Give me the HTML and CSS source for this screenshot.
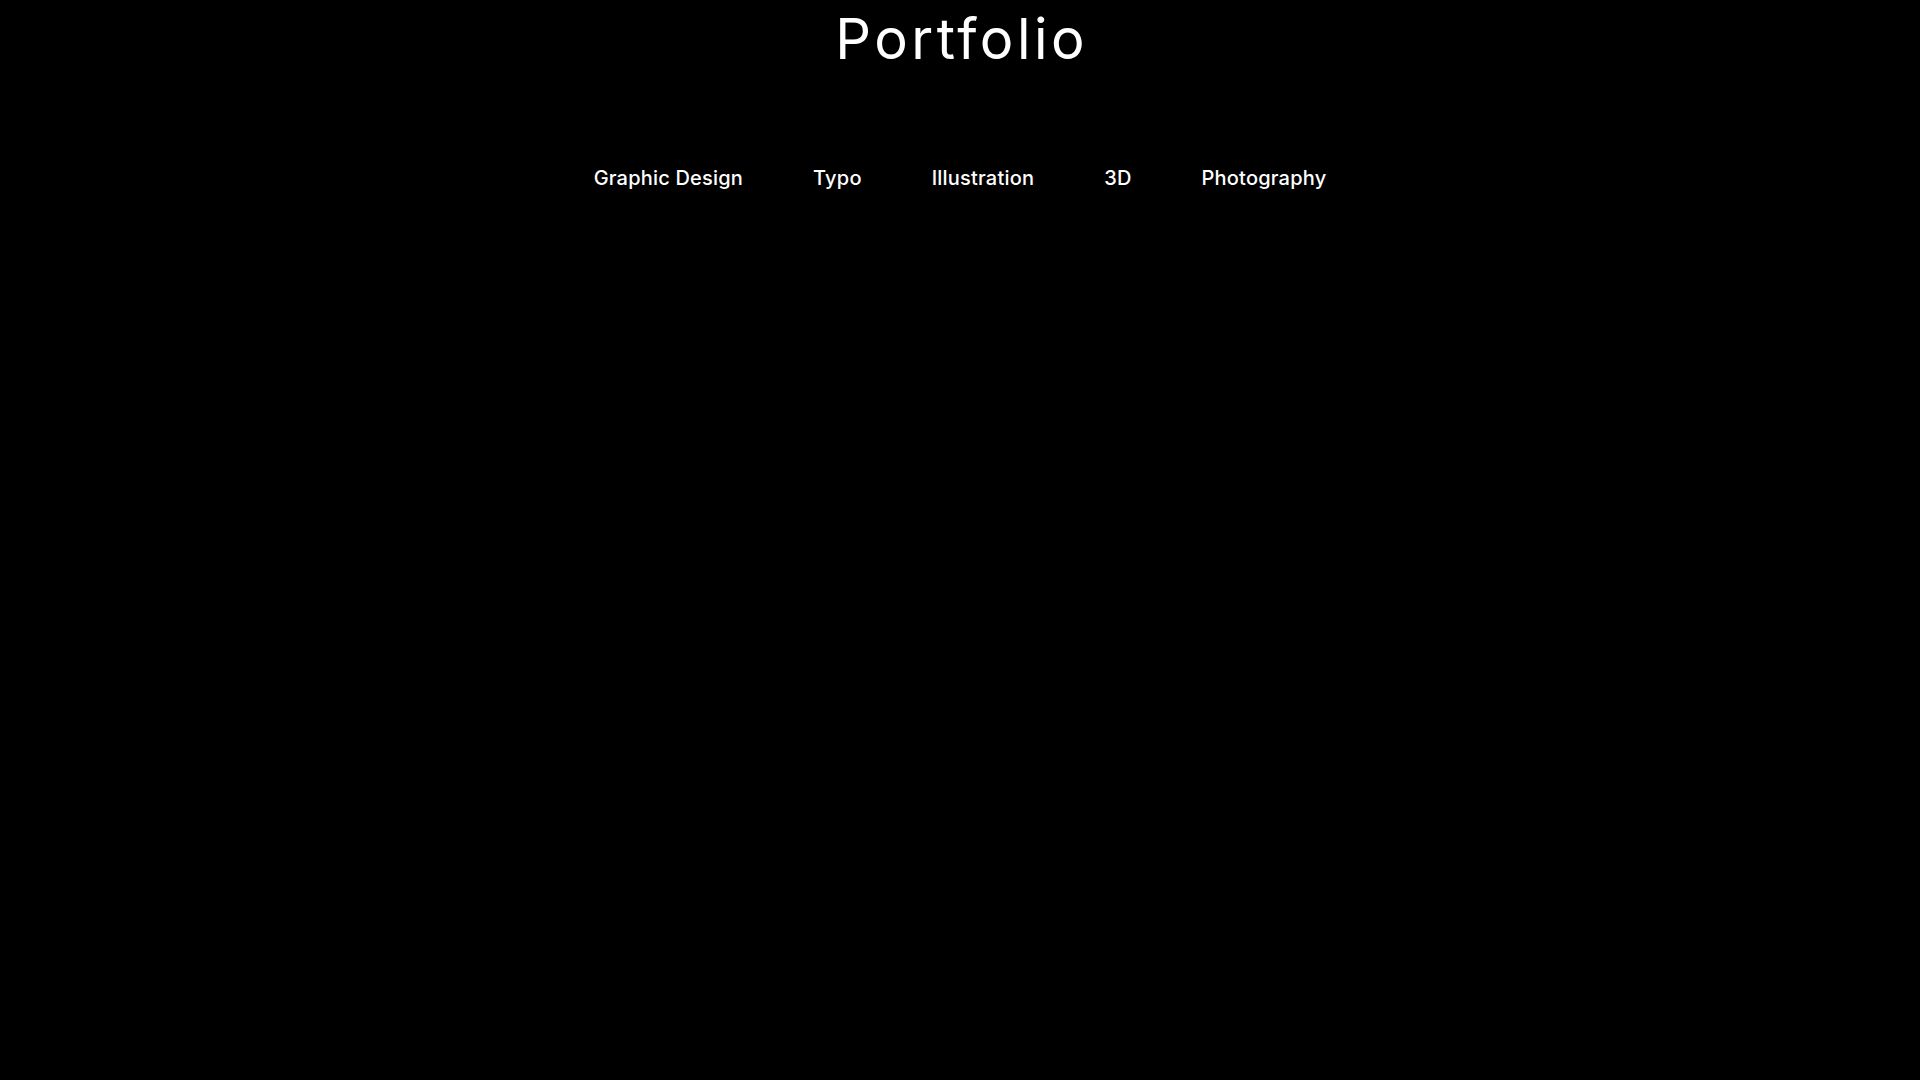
FILE: index.html
```html
<!DOCTYPE html>
<html lang="en">
<head>
<meta charset="utf-8">
<title>Portfolio</title>
<link rel="stylesheet" href="styles.css">
</head>
<body>
<header class="header">
  <h1 class="title">Portfolio</h1>
  <nav class="nav">
    <a class="nav-link" href="#">Graphic Design</a>
    <a class="nav-link" href="#">Typo</a>
    <a class="nav-link" href="#">Illustration</a>
    <a class="nav-link" href="#">3D</a>
    <a class="nav-link" href="#">Photography</a>
  </nav>
</header>
</body>
</html>
```
FILE: styles.css
```css
html, body {
  margin: 0;
  padding: 0;
  background: #000;
  height: 100%;
}
body {
  font-family: Inter, "Open Sans", sans-serif;
  color: #fff;
}
.header {
  display: flex;
  flex-direction: column;
  align-items: center;
}
.title {
  margin: 0;
  padding-left: 3.5px;
  font-size: 56px;
  font-weight: 400;
  letter-spacing: 3.5px;
  line-height: 78px;
}
.nav {
  display: flex;
  gap: 70px;
  margin-top: 88px;
}
.nav-link {
  color: #fff;
  text-decoration: none;
  font-size: 20px;
  font-weight: 500;
  letter-spacing: 0.2px;
  line-height: 24px;
}
```
